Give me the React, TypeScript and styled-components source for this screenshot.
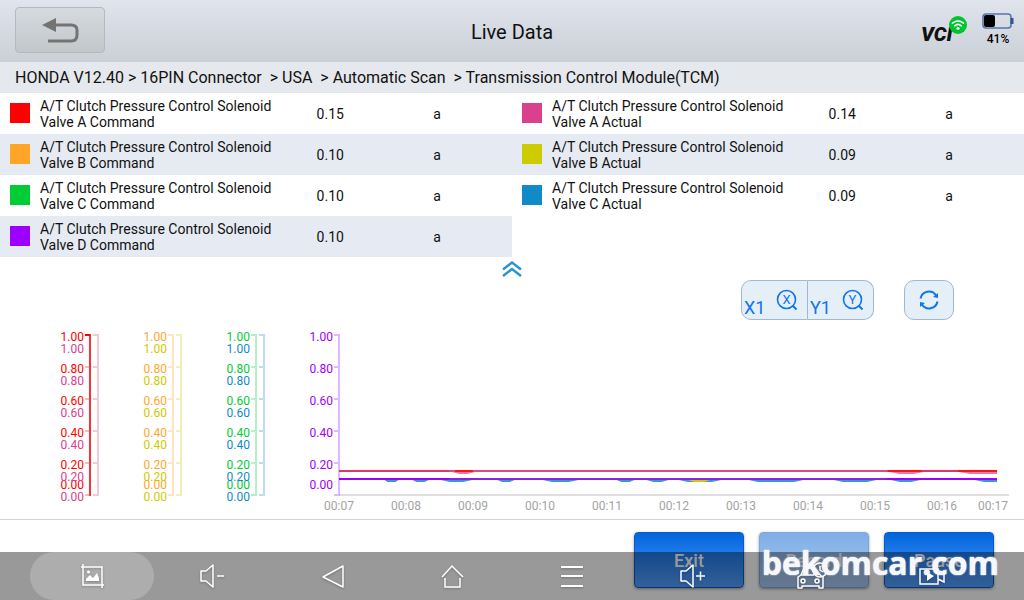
import React from "react";
import styled, { createGlobalStyle, css } from "styled-components";

const GlobalStyle = createGlobalStyle`
  *, *::before, *::after { box-sizing: border-box; }
  body { margin: 0; background: #fff; font-family: Roboto, "Liberation Sans", sans-serif; color: #111; }
  button { font: inherit; padding: 0; cursor: pointer; }
`;

const Screen = styled.div`
  min-height: 100vh;
  display: flex;
  flex-direction: column;
  position: relative;
`;

const Header = styled.header`
  height: 62px;
  display: grid;
  grid-template-columns: 1fr auto 1fr;
  align-items: center;
  padding-bottom: 2px;
  background: linear-gradient(#dfe4ed, #cbcfd6);
`;

const BackButton = styled.button`
  width: 90px;
  height: 46px;
  margin-left: 15px;
  display: flex;
  align-items: center;
  justify-content: center;
  border: 1px solid #b5b9be;
  border-radius: 4px;
  background: linear-gradient(#d5dae0, #c3c7ca);
`;

const Title = styled.h1`
  margin: 0;
  padding-top: 4px;
  font-size: 20px;
  line-height: 24px;
  font-weight: 400;
`;

const Status = styled.div`
  display: flex;
  align-items: center;
  justify-content: flex-end;
  gap: 14px;
  padding-right: 10px;
`;

const Vci = styled.div`
  position: relative;
  width: 47px;
  height: 32px;
  padding-top: 8px;
  font-size: 20px;
  line-height: 24px;
  font-weight: 900;
  font-style: italic;
`;

const WifiBadge = styled.svg`
  position: absolute;
  top: 0;
  right: 0;
`;

const Battery = styled.div`
  width: 32px;
  display: flex;
  flex-direction: column;
  align-items: center;
  gap: 2px;
  font-size: 12px;
  line-height: 16px;
  font-weight: 500;
  color: #000;
`;

const Path = styled.nav`
  padding: 6px 15px 5px;
  background: #e5e8ed;
  font-size: 16px;
  line-height: 20px;
  white-space: pre;
`;

const Readings = styled.section`
  display: grid;
  grid-template-columns: 1fr 1fr;
  align-items: start;
`;

const ReadingTable = styled.table`
  width: 100%;
  table-layout: fixed;
  border-collapse: collapse;
  font-size: 14px;
  line-height: 16px;

  tr { height: 41px; }
  tr:nth-child(even) { background: #e6eaf2; }
  th, td { padding: 0; font-weight: 400; text-align: center; }
`;

const NameCell = styled.th`
  width: 54%;
`;

const Name = styled.div`
  display: flex;
  align-items: center;
  gap: 10px;
  padding-left: 10px;
  text-align: left;

  span { max-width: 240px; }
`;

const Swatch = styled.i<{ $color: string }>`
  flex: none;
  width: 20px;
  height: 20px;
  margin-bottom: 2px;
  background: ${(p) => p.$color};
`;

const ValueCell = styled.td`
  width: 21%;
`;

const UnitCell = styled.td`
  && { padding-right: 22px; }
`;

const Collapse = styled.button`
  align-self: center;
  height: 23px;
  width: 40px;
  display: flex;
  align-items: center;
  justify-content: center;
  border: 0;
  background: none;
`;

const Tools = styled.div`
  display: flex;
  justify-content: flex-end;
  gap: 30px;
  padding-right: 70px;
`;

const toolFace = css`
  height: 40px;
  border: 1px solid #9fb8d4;
  background: #e5eff8;
  color: #0f74ee;
`;

const ZoomGroup = styled.div`
  display: flex;
`;

const ZoomButton = styled.button`
  ${toolFace}
  width: 67px;
  display: flex;
  justify-content: space-between;
  padding: 0 8px 0 2px;
  font-size: 18px;
  line-height: 20px;

  span { align-self: flex-end; padding-bottom: 1px; }
  svg { align-self: center; }
  &:first-child { border-radius: 10px 0 0 10px; }
  &:last-child { border-radius: 0 10px 10px 0; border-left: 0; width: 66px; }
`;

const RefreshButton = styled.button`
  ${toolFace}
  width: 50px;
  border-radius: 10px;
  display: flex;
  align-items: center;
  justify-content: center;
`;

const Chart = styled.svg`
  display: block;
  width: 100%;
  font-size: 12px;
`;

const Actions = styled.footer`
  flex: 1;
  display: flex;
  justify-content: flex-end;
  align-items: flex-start;
  gap: 15px;
  padding: 12px 30px;
  border-top: 1px solid #d3d3d3;
`;

const ActionButton = styled.button`
  width: 110px;
  height: 56px;
  border: 1px solid #0a5cc4;
  border-radius: 4px;
  background: linear-gradient(#0064dc, #56a0ff);
  box-shadow: 0 1px 3px rgba(0, 0, 0, 0.4);
  color: #fff;
  font-size: 18px;
  font-weight: 500;

  &:disabled {
    border-color: #7ea7dc;
    background: linear-gradient(#80aee6, #a8c8f0);
  }
`;

const Watermark = styled.div`
  position: absolute;
  right: 25px;
  bottom: 17px;
  font-family: "Open Sans", "Noto Sans", sans-serif;
  font-size: 32px;
  line-height: 40px;
  font-weight: 700;
  color: #f6f7fa;
  text-shadow: 0 0 1px #f6f7fa, 0 0 2px rgba(246, 247, 250, 0.6);
  z-index: 2;
  pointer-events: none;
`;

const SystemBar = styled.nav`
  position: absolute;
  left: 0;
  right: 0;
  bottom: 0;
  height: 48px;
  display: grid;
  grid-template-columns: repeat(8, 1fr);
  padding: 0 32px;
  background: rgba(0, 0, 0, 0.4);
  z-index: 1;
`;

const SystemButton = styled.button<{ $active?: boolean }>`
  display: flex;
  align-items: center;
  justify-content: center;
  border: 0;
  border-radius: 24px;
  margin: 0 -2px;
  background: ${(p) => (p.$active ? "rgba(255, 255, 255, 0.2)" : "none")};
  color: #fff;

  svg { filter: drop-shadow(0 1px 1px rgba(0, 0, 0, 0.25)); }
`;

interface Reading {
  name: string;
  value: string;
  color: string;
}

const PRE = "A/T Clutch Pressure Control Solenoid Valve ";

const commands: Reading[] = [
  { name: PRE + "A Command", value: "0.15", color: "#ff0000" },
  { name: PRE + "B Command", value: "0.10", color: "#ffa628" },
  { name: PRE + "C Command", value: "0.10", color: "#00cc33" },
  { name: PRE + "D Command", value: "0.10", color: "#9d00ff" },
];

const actuals: Reading[] = [
  { name: PRE + "A Actual", value: "0.14", color: "#d9418c" },
  { name: PRE + "B Actual", value: "0.09", color: "#cccc00" },
  { name: PRE + "C Actual", value: "0.09", color: "#118ac8" },
];

function Table({ label, rows }: { label: string; rows: Reading[] }) {
  return (
    <ReadingTable aria-label={label}>
      <tbody>
        {rows.map((r) => (
          <tr key={r.name}>
            <NameCell scope="row">
              <Name>
                <Swatch $color={r.color} />
                <span>{r.name}</span>
              </Name>
            </NameCell>
            <ValueCell>{r.value}</ValueCell>
            <UnitCell>a</UnitCell>
          </tr>
        ))}
      </tbody>
    </ReadingTable>
  );
}

const scale = ["1.00", "0.80", "0.60", "0.40", "0.20", "0.00"];
const tickY = [15, 47, 79, 111, 143, 175];
const labelY = [21, 53, 85, 117, 149, 169];

interface AxisProps {
  x: number;
  labelX: number;
  color: string;
  drop?: number;
  strong?: boolean;
}

function Axis({ x, labelX, color, drop = 0, strong }: AxisProps) {
  return (
    <g>
      <path d={`M${x} 14V176`} stroke={color} strokeWidth={2} opacity={strong ? 0.8 : 0.28} />
      <path
        d={tickY.map((y) => `M${x - 5} ${y}H${x - 1}`).join("")}
        stroke={color}
        strokeWidth={2}
        opacity={0.28}
      />
      {strong && <path d={`M${x - 5} 15H${x}`} stroke={color} strokeWidth={2} />}
      <g fill={color} textAnchor="end">
        {scale.map((s, i) => (
          <text key={s} x={labelX} y={labelY[i] + drop}>
            {s}
          </text>
        ))}
      </g>
    </g>
  );
}

const axes: AxisProps[] = [
  { x: 90, labelX: 84, color: "#ff0000", strong: true },
  { x: 98, labelX: 84, color: "#d9418c", drop: 12 },
  { x: 173, labelX: 167, color: "#ffa628" },
  { x: 181, labelX: 167, color: "#cccc00", drop: 12 },
  { x: 256, labelX: 250, color: "#00cc33" },
  { x: 264, labelX: 250, color: "#118ac8", drop: 12 },
  { x: 339, labelX: 333, color: "#9d00ff" },
];

const times: [string, number][] = [
  ["00:07", 339], ["00:08", 406], ["00:09", 473], ["00:10", 540], ["00:11", 607], ["00:12", 674],
  ["00:13", 741], ["00:14", 808], ["00:15", 875], ["00:16", 942], ["00:17", 993],
];

/* Spans in which the actual value dips below the commanded one. */
const lowDips: [number, number][] = [
  [383, 400], [410, 431], [436, 477], [495, 517], [538, 583], [614, 637], [643, 672],
  [674, 726], [744, 808], [829, 881], [886, 925],
];

const dip = (a: number, b: number, y: number) => {
  const e = Math.min(14, (b - a) / 2 - 4);
  return `M${a} ${y}L${a + e} ${y + 3}H${b - e}L${b} ${y}Z`;
};

function LiveChart() {
  return (
    <Chart viewBox="0 0 1024 199" role="img" aria-label="Solenoid values over time">
      <path d="M339 175H1009" stroke="#e0e0e0" strokeWidth={2} />
      {axes.map((a) => (
        <Axis key={a.x} {...a} />
      ))}
      <path d={dip(448, 479, 151) + dip(885, 928, 151) + "M954 151L970 154H997V151Z"} fill="#d9418c" opacity={0.7} />
      <path d="M339 151H997" stroke="#e0356f" strokeWidth={2} />
      <path d="M449 151H887" stroke="#e4487f" strokeWidth={2} />
      <path d="M455 151H473M888 151H922M958 151H997" stroke="#ff1414" strokeWidth={2} />
      <path d={lowDips.map(([a, b]) => dip(a, b, 159)).join("") + "M970 159L984 162H997V159Z"} fill="#118ac8" opacity={0.85} />
      <path d="M688 160H710L704 162H694Z" fill="#cccc00" />
      <path d="M339 159H997" stroke="#9d00ff" strokeWidth={2} />
      <path d="M449 159H887" stroke="#8a22e0" strokeWidth={2} />
      <g fill="#a3a3a3" textAnchor="middle">
        {times.map(([t, x]) => (
          <text key={t} x={x} y={190}>
            {t}
          </text>
        ))}
      </g>
    </Chart>
  );
}

function ZoomIcon({ letter }: { letter: string }) {
  return (
    <svg width="24" height="24" viewBox="0 0 24 24" fill="none" stroke="currentColor" strokeWidth="1.6">
      <circle cx="11.500" cy="11.500" r="9" />
      <path d="M17.500 17.500L21.500 21.500" strokeWidth="2" />
      <text x="11.500" y="16" fontSize="13" textAnchor="middle" fill="currentColor" stroke="none">
        {letter}
      </text>
    </svg>
  );
}

function Icon({ children }: { children: React.ReactNode }) {
  return (
    <svg width="32" height="32" viewBox="0 0 32 32" fill="none" stroke="currentColor" strokeWidth="1.5">
      {children}
    </svg>
  );
}

const speaker = <path d="M5 11H10L17 5V27L10 21H5Z" strokeLinejoin="round" />;

export default function App() {
  return (
    <Screen>
      <GlobalStyle />
      <Header>
        <BackButton aria-label="Back">
          <svg width="38" height="26" viewBox="0 0 38 26" fill="none">
            <path d="M13 8H30Q36 8 36 13V18Q36 24 30 24H7" stroke="#747474" strokeWidth="3" />
            <path d="M1 8L15 1V15Z" fill="#747474" />
          </svg>
        </BackButton>
        <Title>Live Data</Title>
        <Status>
          <Vci>
            VCI
            <WifiBadge width="20" height="20" viewBox="0 0 20 20" fill="none">
              <circle cx="10" cy="11" r="9" fill="#00c52e" />
              <g stroke="#fff" strokeWidth="1.6" strokeLinecap="round">
                <path d="M4.500 9.200Q10 4.800 15.500 9.200" />
                <path d="M6.700 11.800Q10 9 13.300 11.800" />
              </g>
              <circle cx="10" cy="14.300" r="1.500" fill="#fff" />
            </WifiBadge>
          </Vci>
          <Battery>
            <svg width="32" height="16" viewBox="0 0 32 16" fill="none">
              <rect x="1" y="1" width="28" height="14" rx="3" stroke="#5577aa" strokeWidth="1.6" />
              <rect x="2" y="2" width="11" height="12" rx="2" fill="#000" />
              <path d="M30 5V11" stroke="#2f5597" strokeWidth="3" />
            </svg>
            41%
          </Battery>
        </Status>
      </Header>
      <Path aria-label="Breadcrumb">
        {"HONDA V12.40 > 16PIN Connector  > USA  > Automatic Scan  > Transmission Control Module(TCM)"}
      </Path>
      <Readings>
        <Table label="Commanded values" rows={commands} />
        <Table label="Actual values" rows={actuals} />
      </Readings>
      <Collapse aria-label="Collapse list">
        <svg width="20" height="16" viewBox="0 0 20 16" fill="none" stroke="#2b93d0" strokeWidth="2.400">
          <path d="M1 8.500L10 1.500L19 8.500M1 15L10 8L19 15" />
        </svg>
      </Collapse>
      <Tools>
        <ZoomGroup>
          <ZoomButton>
            <span>X1</span>
            <ZoomIcon letter="X" />
          </ZoomButton>
          <ZoomButton>
            <span>Y1</span>
            <ZoomIcon letter="Y" />
          </ZoomButton>
        </ZoomGroup>
        <RefreshButton aria-label="Refresh">
          <svg width="20" height="20" viewBox="0 0 20 20" fill="none" stroke="currentColor" strokeWidth="2">
            <path d="M1.500 8.500A8.500 8.500 0 0 1 17 5.500M18.500 11.500A8.500 8.500 0 0 1 3 14.500" />
            <path d="M19 3V8L14 7ZM1 17V12L6 13Z" fill="currentColor" stroke="none" />
          </svg>
        </RefreshButton>
      </Tools>
      <LiveChart />
      <Actions>
        <ActionButton>Exit</ActionButton>
        <ActionButton disabled>Record</ActionButton>
        <ActionButton>Pause</ActionButton>
      </Actions>
      <SystemBar aria-label="System">
        <SystemButton $active aria-label="Screenshot">
          <Icon>
            <path d="M5 7H26V28M7 4V25H28" />
            <circle cx="12.500" cy="12" r="1.500" fill="currentColor" stroke="none" />
            <path d="M10 21V19L14 15L17 18L21 13L23 18V21Z" fill="currentColor" stroke="none" />
          </Icon>
        </SystemButton>
        <SystemButton aria-label="Volume down">
          <Icon>
            {speaker}
            <path d="M21 16H28" />
          </Icon>
        </SystemButton>
        <SystemButton aria-label="Back">
          <Icon>
            <path d="M7 17L27 6V27Z" strokeLinejoin="round" />
          </Icon>
        </SystemButton>
        <SystemButton aria-label="Home">
          <Icon>
            <path d="M6 17L16 6L27 17M9 18V27H24V18" />
          </Icon>
        </SystemButton>
        <SystemButton aria-label="Menu">
          <Icon>
            <path d="M5 7H27M5 16H27M5 26H27" strokeWidth="2" />
          </Icon>
        </SystemButton>
        <SystemButton aria-label="Volume up">
          <Icon>
            {speaker}
            <path d="M20 16H29M24.500 11.500V20.500" />
          </Icon>
        </SystemButton>
        <SystemButton aria-label="Vehicle">
          <Icon>
            <path d="M18 8H8L5 15L2 17V28H6V26H23V28H27V17L24 15M5 15H18" strokeLinejoin="round" />
            <circle cx="7" cy="21" r="2" />
            <circle cx="21" cy="21" r="2" />
            <circle cx="24" cy="10" r="7" />
            <path d="M24 6V10L27 12" />
          </Icon>
        </SystemButton>
        <SystemButton aria-label="Record screen">
          <Icon>
            <path d="M4 9H22V24H4ZM22 14L28 11V22L22 19" />
            <path d="M11 12L18 16L11 21Z" fill="currentColor" stroke="none" />
          </Icon>
        </SystemButton>
      </SystemBar>
      <Watermark>bekomcar.com</Watermark>
    </Screen>
  );
}
